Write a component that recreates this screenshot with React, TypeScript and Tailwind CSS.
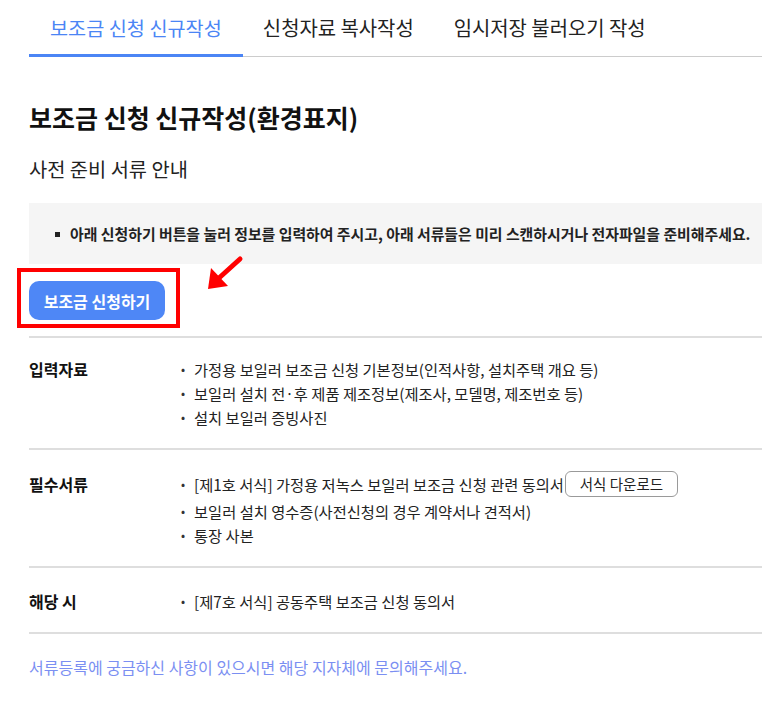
import React from "react"

const tabs = ["보조금 신청 신규작성", "신청자료 복사작성", "임시저장 불러오기 작성"]

const Item = ({ children }: { children: React.ReactNode }) => (
    <li className="flex items-center">
        <span className="w-[13px] shrink-0 text-[12px] leading-none text-[#333]">•</span>
        <span>{children}</span>
    </li>
)

export default function App() {
    return (
        <div className="min-h-screen bg-white pl-[29px] text-[#222] font-['Noto_Sans_CJK_KR','Noto_Sans',sans-serif] overflow-hidden">
            {/* tabs */}
            <div className="flex border-b border-[#cccccc]">
                {tabs.map((t, i) => (
                    <div
                        key={t}
                        className={
                            i === 0
                                ? "-mb-px px-[21px] pt-[14px] pb-[13px] text-[19.7px] leading-[27px] text-[#4b85f5] border-b-[3px] border-[#4b85f5] whitespace-nowrap"
                                : "-mb-px px-[20px] pt-[14px] pb-[13px] text-[19.9px] leading-[27px] text-[#222] border-b-[3px] border-transparent whitespace-nowrap"
                        }
                    >
                        {t}
                    </div>
                ))}
            </div>

            <h1 className="mt-[44px] text-[25px] leading-[32px] font-bold text-[#111]">보조금 신청 신규작성(환경표지)</h1>
            <h2 className="mt-[23px] text-[19.8px] leading-[26px] text-[#222]">사전 준비 서류 안내</h2>

            <div className="mt-[21px] bg-[#f5f5f5] pt-[21px] pb-[20px] pl-[26px]">
                <div className="flex items-center text-[14.9px] leading-[20px] font-bold text-[#222] whitespace-nowrap">
                    <span className="w-[5px] h-[5px] bg-[#222] mr-[10px]" />
                    아래 신청하기 버튼을 눌러 정보를 입력하여 주시고, 아래 서류들은 미리 스캔하시거나 전자파일을 준비해주세요.
                </div>
            </div>

            <div className="relative mt-[17px]">
                <button className="h-[39px] w-[136px] rounded-[10px] bg-[#4e87f6] text-white text-[16px] font-bold">
                    보조금 신청하기
                </button>
                {/* annotation */}
                <span className="absolute left-[-12px] top-[-13px] w-[163px] h-[60px] border-[4px] border-[#ff0000] pointer-events-none" />
                <svg className="absolute left-[176px] top-[-26px]" width="42" height="40" viewBox="0 0 42 40">
                    <line x1="35" y1="4" x2="14" y2="23" stroke="#ff0000" strokeWidth="5" strokeLinecap="round" />
                    <polygon points="3,34 6,13 23,31" fill="#ff0000" />
                </svg>
            </div>

            <div className="mt-[16px] border-t-2 border-[#dedede]">
                <div className="flex py-[19px] border-b-2 border-[#dedede]">
                    <div className="w-[152px] shrink-0 text-[16px] leading-[24px] font-bold text-[#111]">입력자료</div>
                    <ul className="text-[15.3px] leading-[24px] text-[#222] whitespace-nowrap">
                        <Item>가정용 보일러 보조금 신청 기본정보(인적사항, 설치주택 개요 등)</Item>
                        <Item>보일러 설치 전·후 제품 제조정보(제조사, 모델명, 제조번호 등)</Item>
                        <Item>설치 보일러 증빙사진</Item>
                    </ul>
                </div>

                <div className="flex py-[19px] border-b-2 border-[#dedede]">
                    <div className="w-[152px] shrink-0 pt-[3px] text-[16px] leading-[24px] font-bold text-[#111]">필수서류</div>
                    <ul className="text-[15.3px] leading-[24px] text-[#222] whitespace-nowrap">
                        <li className="flex items-center h-[30px]">
                            <span className="w-[13px] shrink-0 text-[12px] leading-none text-[#333]">•</span>
                            <span>[제1호 서식] 가정용 저녹스 보일러 보조금 신청 관련 동의서</span>
                            <button className="ml-px h-[26px] w-[113px] rounded-[6px] border border-[#9a9a9a] bg-white text-[14.5px] text-[#222]">
                                서식 다운로드
                            </button>
                        </li>
                        <Item>보일러 설치 영수증(사전신청의 경우 계약서나 견적서)</Item>
                        <Item>통장 사본</Item>
                    </ul>
                </div>

                <div className="flex pt-[21px] pb-[19px] border-b-2 border-[#dedede]">
                    <div className="w-[152px] shrink-0 text-[16px] leading-[24px] font-bold text-[#111]">해당 시</div>
                    <ul className="text-[15.3px] leading-[24px] text-[#222]">
                        <Item>[제7호 서식] 공동주택 보조금 신청 동의서</Item>
                    </ul>
                </div>
            </div>

            <p className="mt-[21px] text-[16px] leading-[24px] text-[#7b8ff2]">
                서류등록에 궁금하신 사항이 있으시면 해당 지자체에 문의해주세요.
            </p>
        </div>
    )
}
